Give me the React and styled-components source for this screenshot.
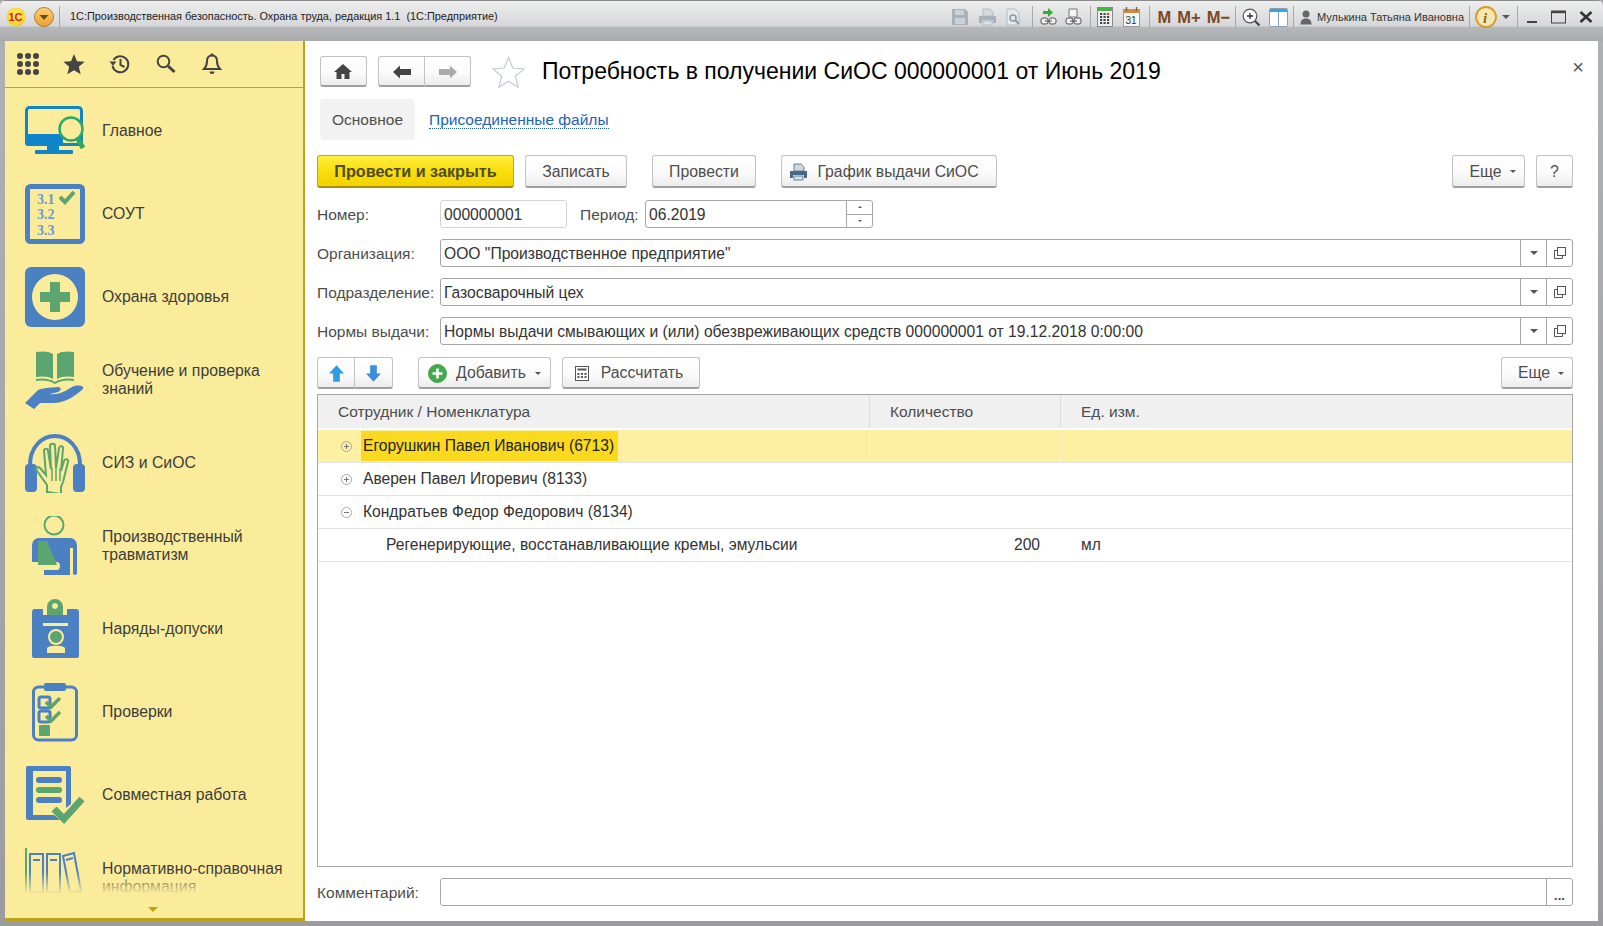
import React from 'react';
import styled, { createGlobalStyle } from 'styled-components';

const GlobalStyle = createGlobalStyle`
    html, body { margin: 0; padding: 0; height: 100%; overflow: hidden; }
    body { font-family: "Liberation Sans", Arial, sans-serif; background: #a9a9ab; }
    * { box-sizing: border-box; }
`;

const Window = styled.div`
    width: 1603px;
    height: 926px;
    display: flex;
    flex-direction: column;
    background: linear-gradient(#b0b1b3, #9c9c9e);
    border-radius: 6px 6px 0 0;
    overflow: hidden;
`;

const TitleBar = styled.div`
    height: 41px;
    flex: none;
    display: flex;
    align-items: flex-start;
    padding: 5px 10px 0 6px;
    border-top: 1px solid #8b8b8b;
    background: linear-gradient(#eeeeee 0, #d6d7d9 62%, #b6b7b9 66%, #a9aaac 100%);
`;

const TitleGroup = styled.div`
    display: flex;
    align-items: center;
    height: 22px;
    gap: ${(p) => p.$gap || 0}px;
    margin-left: ${(p) => p.$left || 0}px;
`;

const TitleSep = styled.div`
    width: 1px;
    height: 22px;
    background: #a9a9a9;
    margin-left: ${(p) => p.$left || 0}px;
`;

const AppTitle = styled.div`
    margin-left: 10px;
    font-size: 10.9px;
    line-height: 21px;
    color: #222;
    white-space: nowrap;
    flex: 1;
`;

const MemoText = styled.span`
    font-weight: 700;
    font-size: 16.5px;
    color: #7c4a21;
`;

const UserName = styled.span`
    font-size: 11px;
    color: #333;
    white-space: nowrap;
`;

const Body = styled.div`
    flex: 1;
    min-height: 0;
    display: flex;
    margin: 0 5px 5px 5px;
`;

const Sidebar = styled.aside`
    position: relative;
    width: 300px;
    flex: none;
    overflow: hidden;
    background: #fbec9b;
    border-right: 2px solid #bca318;
    border-bottom: 3px solid #bca318;
    display: flex;
    flex-direction: column;
`;

const SideTop = styled.div`
    height: 47px;
    flex: none;
    border-bottom: 1px solid #bca318;
    display: flex;
    align-items: center;
    gap: 24px;
    padding: 0 0 0 12px;
`;

const SideList = styled.div`
    padding-top: 1px;
`;

const SideItem = styled.div`
    height: 83px;
    display: flex;
    align-items: center;
    padding-left: 20px;
`;

const SideIcon = styled.svg`
    width: 60px;
    height: 60px;
    flex: none;
`;

const SideLabel = styled.div`
    margin-left: 17px;
    width: 190px;
    font-size: 15.8px;
    line-height: 18px;
    color: #3d3d3d;
`;

const SideFade = styled.div`
    position: absolute;
    left: 0;
    right: 0;
    bottom: 0;
    height: 46px;
    background: linear-gradient(rgba(251, 236, 155, 0), #fbec9b 48%);
`;

const SideArrow = styled.div`
    position: absolute;
    left: 143px;
    bottom: 6px;
    width: 0;
    height: 0;
    border-left: 5px solid transparent;
    border-right: 5px solid transparent;
    border-top: 5px solid #bca318;
`;

const Main = styled.main`
    flex: 1;
    min-width: 0;
    background: #fff;
    padding: 15px 25px 0 12px;
    display: flex;
    flex-direction: column;
    color: #4d4d4d;
    font-size: 15.5px;
`;

const HeaderRow = styled.div`
    height: 31px;
    display: flex;
    align-items: center;
    padding-left: 3px;
`;

const Title = styled.h1`
    margin: -1px 0 0 17px;
    font-weight: 400;
    font-size: 23px;
    color: #000;
    white-space: nowrap;
    flex: 1;
`;

const CloseMark = styled.div`
    margin: -10px -11px 0 0;
    font-size: 20px;
    line-height: 20px;
    color: #555;
`;

const BtnGroup = styled.div`
    display: flex;
    margin-left: ${(p) => p.$left || 0}px;
    height: ${(p) => p.$h || 32}px;
`;

const Btn = styled.button`
    font-family: inherit;
    font-size: 15.8px;
    color: #4d4d4d;
    height: ${(p) => p.$h || 33}px;
    width: ${(p) => p.$w}px;
    margin-left: ${(p) => p.$left || 0}px;
    padding: 1px ${(p) => p.$pr || 0}px 0 ${(p) => p.$pl || 0}px;
    display: flex;
    align-items: center;
    justify-content: center;
    gap: ${(p) => p.$gap || 0}px;
    flex: none;
    border: 1px solid #c2c2c2;
    border-bottom: 2px solid #9f9f9f;
    border-radius: 3px;
    background: linear-gradient(#ffffff 0, #fbfbfb 55%, #ececec 100%);
`;

const PrimaryBtn = styled(Btn)`
    color: #4d4d22;
    font-weight: 700;
    font-size: 16.2px;
    border-color: #c8ab00;
    border-bottom-color: #a98f00;
    background: linear-gradient(#ffef3f 0, #fbdf10 45%, #f2d200 100%);
`;

const SegBtn = styled(Btn)`
    border-radius: ${(p) => (p.$last ? '0 3px 3px 0' : '3px 0 0 3px')};
    border-left-width: ${(p) => (p.$last ? 0 : 1)}px;
`;

const TabsRow = styled.div`
    margin-top: 12px;
    height: 41px;
    display: flex;
    align-items: center;
    padding-left: 3px;
`;

const ActiveTab = styled.div`
    width: 95px;
    height: 41px;
    border-radius: 4px;
    background: #f2f2f2;
    display: flex;
    align-items: center;
    justify-content: center;
`;

const TabLink = styled.span`
    margin-left: 14px;
    color: #1c63b8;
    border-bottom: 1px dotted #1c63b8;
    line-height: 17px;
`;

const ActionRow = styled.div`
    margin-top: 15px;
    display: flex;
`;

const Spacer = styled.div`
    flex: 1;
`;

const FieldRow = styled.div`
    margin-top: ${(p) => p.$top || 11}px;
    height: 28px;
    display: flex;
    align-items: center;
`;

const Label = styled.span`
    width: ${(p) => p.$w || 123}px;
    margin-left: ${(p) => p.$left || 0}px;
    padding-top: 1px;
    flex: none;
    white-space: nowrap;
`;

const Input = styled.div`
    width: ${(p) => (p.$w ? `${p.$w}px` : 'auto')};
    flex: ${(p) => (p.$w ? 'none' : 1)};
    height: 28px;
    display: flex;
    align-items: center;
    border: 1px solid ${(p) => (p.$light ? '#d4d4d4' : '#a6a6a6')};
    border-radius: 3px;
    color: #333;
    font-size: 15.65px;
    overflow: hidden;
`;

const InputText = styled.span`
    flex: 1;
    padding: 1px 0 0 3px;
    white-space: nowrap;
`;

const InputBtn = styled.div`
    width: 26px;
    height: 100%;
    border-left: 1px solid #a6a6a6;
    display: flex;
    align-items: center;
    justify-content: center;
    flex: none;
`;

const Spinner = styled.div`
    width: 26px;
    height: 100%;
    border-left: 1px solid #a6a6a6;
    display: flex;
    flex-direction: column;
    flex: none;
`;

const SpinPart = styled.div`
    flex: 1;
    display: flex;
    align-items: center;
    justify-content: center;
    & + & {
        border-top: 1px solid #a6a6a6;
    }
`;

const Caret = styled.span`
    width: 0;
    height: 0;
    border-left: ${(p) => p.$s || 4}px solid transparent;
    border-right: ${(p) => p.$s || 4}px solid transparent;
    border-top: ${(p) => p.$s || 4}px solid #555;
`;

const CaretUp = styled(Caret)`
    border-top: 0;
    border-bottom: ${(p) => p.$s || 4}px solid #555;
`;

const Toolbar = styled.div`
    margin-top: 12px;
    height: 32px;
    display: flex;
`;

const Table = styled.div`
    margin-top: 5px;
    height: 473px;
    border: 1px solid #a6a6a6;
    flex: none;
`;

const TableRow = styled.div`
    display: grid;
    grid-template-columns: 552px 191px 1fr;
    height: ${(p) => p.$h || 33}px;
    border-bottom: 1px solid #e2e2e2;
    background: ${(p) => (p.$selected ? '#fdf0a3' : 'transparent')};
`;

const HeadRow = styled(TableRow)`
    height: 33px;
    background: #f0f0f0;
    border-bottom: 0;
    margin-bottom: 2px;
`;

const HeadCell = styled.div`
    display: flex;
    align-items: center;
    padding-left: ${(p) => p.$pad || 20}px;
    border-right: 1px solid ${(p) => (p.$last ? 'transparent' : '#dcdcdc')};
`;

const Cell = styled.div`
    display: flex;
    align-items: center;
    height: 100%;
    min-width: 0;
    color: #333;
    font-size: 15.6px;
    white-space: nowrap;
    padding-left: ${(p) => p.$pad || 0}px;
    justify-content: ${(p) => (p.$right ? 'flex-end' : 'flex-start')};
    padding-right: ${(p) => (p.$right ? 20 : 0)}px;
    border-right: 1px solid ${(p) => (p.$divided ? '#fff6c4' : 'transparent')};
`;

const TreeMark = styled.span`
    width: 11px;
    height: 11px;
    border: 1px solid #a8a8a8;
    border-radius: 50%;
    position: relative;
    flex: none;
    margin-right: 11px;
    &::before {
        content: '';
        position: absolute;
        left: 2px;
        right: 2px;
        top: 4px;
        height: 1px;
        background: #777;
    }
    &::after {
        content: '';
        display: ${(p) => (p.$open ? 'none' : 'block')};
        position: absolute;
        top: 2px;
        bottom: 2px;
        left: 4px;
        width: 1px;
        background: #777;
    }
`;

const Highlight = styled.span`
    height: 30px;
    margin-left: -2px;
    padding: 0 4px 0 2px;
    display: flex;
    align-items: center;
    background: ${(p) => (p.$on ? '#fbd91f' : 'transparent')};
    color: ${(p) => (p.$on ? '#222' : '#333')};
`;

const Dots = styled.span`
    font-weight: 700;
    font-size: 13px;
    color: #444;
    margin-top: 6px;
`;

const StarGap = styled.span`
    width: 21px;
    flex: none;
`;

// --- small icon set, all hand drawn to follow the picture ---

const Glyph = ({ w = 18, h = 18, vb, children }) => (
    <svg width={w} height={h} viewBox={vb || `0 0 ${w} ${h}`} style={{ flex: 'none' }}>
        {children}
    </svg>
);

const LogoMark = () => (
    <Glyph w={20} h={20}>
        <defs>
            <radialGradient id="logoBg" cx="50%" cy="40%" r="60%">
                <stop offset="0%" stopColor="#ffef6a" />
                <stop offset="100%" stopColor="#f8cf1c" />
            </radialGradient>
        </defs>
        <circle cx="10" cy="10" r="9.5" fill="url(#logoBg)" />
        <text x="2.5" y="14" fontSize="11" fontWeight="700" fill="#d62020" fontFamily="Liberation Sans">1С</text>
    </Glyph>
);

const MenuCircle = () => (
    <Glyph w={20} h={20}>
        <defs>
            <linearGradient id="menuBg" x1="0" y1="0" x2="0" y2="1">
                <stop offset="0%" stopColor="#fbd27a" />
                <stop offset="100%" stopColor="#ec9f2d" />
            </linearGradient>
        </defs>
        <circle cx="10" cy="10" r="9.5" fill="url(#menuBg)" stroke="#a8803c" strokeWidth="1" />
        <path d="M5.5 8h9L10 13z" fill="#6b4a1c" />
    </Glyph>
);

const SaveIcon = () => (
    <Glyph>
        <path d="M1 1h13l3 3v13H1z" fill="#a9b2bb" />
        <rect x="4" y="2" width="9" height="5" fill="#cdd2d7" />
        <rect x="4" y="10" width="10" height="6" fill="#cdd2d7" />
    </Glyph>
);

const PrintIcon = ({ color = '#a9b2bb', w = 19 }) => (
    <Glyph w={w} h={18} vb="0 0 19 18">
        <path d="M5 1h7l3 3v4H5z" fill="#d5d8db" stroke={color} strokeWidth="0.8" />
        <path d="M1 8h17v7h-3v-3H4v3H1z" fill={color} />
        <rect x="5" y="13" width="9" height="4" fill="#dfe2e5" stroke={color} strokeWidth="0.8" />
    </Glyph>
);

const PreviewIcon = () => (
    <Glyph w={14} h={18}>
        <path d="M1 1h8l4 4v12H1z" fill="#e6e8ea" stroke="#b7bdc2" />
        <circle cx="7" cy="10" r="3" fill="none" stroke="#8d99a3" strokeWidth="1.5" />
        <path d="M9 12l4 4" stroke="#8d99a3" strokeWidth="2" />
    </Glyph>
);

const LinkDocIcon = ({ green }) => (
    <Glyph w={17} h={18}>
        {green ? (
            <path d="M3 3h5V0l5 4.500L8 9V6H3z" fill="#3aa83a" />
        ) : (
            <path d="M4 1h8v8H4z" fill="#f4f4f4" stroke="#777" />
        )}
        <rect x="1" y="10" width="7" height="6" rx="2" fill="#eee" stroke="#555" />
        <rect x="9" y="10" width="7" height="6" rx="2" fill="#eee" stroke="#555" />
        <path d="M5 13h7" stroke="#555" />
    </Glyph>
);

const CalcIcon = () => (
    <Glyph w={16} h={20}>
        <rect x="0.5" y="0.5" width="15" height="19" fill="#f0f0f0" stroke="#888" />
        <rect x="1" y="1" width="14" height="3" fill="#4db04a" />
        {[6, 9, 12, 15].map((y) =>
            [3, 6.5, 10].map((x) => <rect key={`${x}-${y}`} x={x} y={y} width="2.2" height="2" fill={y === 6 && x === 10 ? '#e03030' : '#444'} />)
        )}
    </Glyph>
);

const CalendarIcon = () => (
    <Glyph w={17} h={20}>
        <rect x="0.5" y="2.5" width="16" height="17" fill="#f7f7f7" stroke="#999" />
        <rect x="1" y="3" width="15" height="3" fill="#d08a48" />
        <path d="M3.5 0v4M13.5 0v4" stroke="#8a5a2c" strokeWidth="1.4" />
        <text x="2.5" y="16.5" fontSize="10" fill="#333" fontFamily="Liberation Sans">31</text>
    </Glyph>
);

const ZoomPlusIcon = () => (
    <Glyph w={18} h={19}>
        <circle cx="8" cy="8" r="6.8" fill="#f7f7f7" stroke="#555" strokeWidth="1.2" />
        <path d="M5 8h6M8 5v6" stroke="#333" strokeWidth="1.3" />
        <path d="M13 13l4.5 4.5" stroke="#444" strokeWidth="2.2" />
    </Glyph>
);

const PanelIcon = () => (
    <Glyph w={19} h={19}>
        <rect x="0.5" y="0.5" width="18" height="18" rx="1" fill="#fdfdfd" stroke="#8aa0b5" />
        <rect x="1" y="1" width="17" height="3" fill="#3fa0e6" />
        <path d="M9.5 4v14" stroke="#8aa0b5" />
    </Glyph>
);

const UserIcon = () => (
    <Glyph w={12} h={15}>
        <circle cx="6" cy="4" r="3.5" fill="#666" />
        <path d="M0.5 14.5c0-4 2-6 5.5-6s5.5 2 5.5 6z" fill="#666" />
    </Glyph>
);

const InfoIcon = () => (
    <Glyph w={22} h={22}>
        <circle cx="11" cy="11" r="10" fill="#f6e7b0" stroke="#d79a2c" strokeWidth="1.8" />
        <text x="8" y="17" fontSize="15" fontStyle="italic" fontWeight="700" fill="#8a6a20" fontFamily="Liberation Serif">i</text>
    </Glyph>
);

const WinMin = () => (
    <Glyph w={11} h={14}>
        <rect y="11" width="10" height="2" fill="#444" />
    </Glyph>
);

const WinMax = () => (
    <Glyph w={15} h={14}>
        <rect x="0.5" y="1" width="14" height="12" fill="none" stroke="#444" />
        <rect x="0.5" y="1" width="14" height="2.2" fill="#444" />
    </Glyph>
);

const WinClose = () => (
    <Glyph w={14} h={14}>
        <path d="M1.5 2l11 10M12.5 2l-11 10" stroke="#333" strokeWidth="2.6" />
    </Glyph>
);

const AppsIcon = () => (
    <Glyph w={22} h={22}>
        {[3, 11, 19].map((y) =>
            [3, 11, 19].map((x) => <circle key={`${x}-${y}`} cx={x} cy={y} r="3" fill="#444" />)
        )}
    </Glyph>
);

const StarIcon = () => (
    <Glyph w={22} h={22}>
        <path d="M11 1l3 7.2 7.7.6-5.9 5 1.9 7.5L11 17.3l-6.7 4 1.9-7.5-5.9-5 7.7-.6z" fill="#444" />
    </Glyph>
);

const HistoryIcon = () => (
    <Glyph w={22} h={22}>
        <path d="M4.5 7a8 8 0 1 1-1 6" fill="none" stroke="#444" strokeWidth="2" />
        <path d="M0.5 7.5h7L4 12z" fill="#444" transform="translate(0 1)" />
        <path d="M11.5 6v6l4 2" fill="none" stroke="#444" strokeWidth="2" />
    </Glyph>
);

const SearchIcon = () => (
    <Glyph w={22} h={22} vb="-1 -1 22 22">
        <circle cx="7.5" cy="7.5" r="5.8" fill="none" stroke="#444" strokeWidth="2" />
        <path d="M12 12l6.5 6" stroke="#444" strokeWidth="3" />
    </Glyph>
);

const BellIcon = () => (
    <Glyph w={22} h={22} vb="-1 0 22 22">
        <path d="M10 2.500c-3.600 0-5 2.600-5 5.500 0 4-1 6-3 8h16c-2-2-3-4-3-8 0-2.900-1.400-5.500-5-5.500z" fill="none" stroke="#444" strokeWidth="2" />
        <path d="M7.500 18.500a2.500 2.500 0 0 0 5 0z" fill="#444" />
        <circle cx="10" cy="1.800" r="1.500" fill="#444" />
    </Glyph>
);

const HomeIcon = () => (
    <Glyph w={18} h={15}>
        <path d="M9 0L0 8h2.500v7h5v-5h3v5h5V8H18z" fill="#444" />
    </Glyph>
);

const ArrowIcon = ({ dir, color }) => (
    <Glyph w={18} h={14}>
        <path
            d={dir === 'left' ? 'M0 7l7-6.500V4h11v6H7v3.500z' : 'M18 7l-7-6.500V4H0v6h11v3.500z'}
            fill={color}
        />
    </Glyph>
);

const OutlineStar = () => (
    <Glyph w={33} h={32}>
        <path d="M16.500 1.500l4.300 10.500 11.200.9-8.600 7.300 2.700 11-9.600-5.900-9.600 5.900 2.700-11L1 12.900 12.200 12z" fill="#fff" stroke="#c4cad0" strokeWidth="1.200" />
    </Glyph>
);

const VertArrow = ({ up }) => (
    <Glyph w={15} h={17} vb="0 0 18 20">
        <path
            d={up ? 'M9 0l9 10h-5v10H5V10H0z' : 'M9 20l9-10h-5V0H5v10H0z'}
            fill={up ? '#2f9be4' : '#3d8fdc'}
        />
    </Glyph>
);

const PlusCircle = () => (
    <Glyph w={19} h={19}>
        <circle cx="9.500" cy="9.500" r="9" fill="#3fae49" stroke="#2f8f38" strokeWidth="0.8" />
        <path d="M4.500 9.500h10M9.500 4.500v10" stroke="#fff" strokeWidth="2.600" />
    </Glyph>
);

const SmallCalc = () => (
    <Glyph w={14} h={15}>
        <rect x="0.500" y="0.500" width="13" height="14" fill="#fff" stroke="#555" />
        <rect x="2.500" y="2.500" width="9" height="2" fill="#555" />
        {[7, 10].map((y) =>
            [2.5, 6, 9.500].map((x) => <rect key={`${x}-${y}`} x={x} y={y} width="2" height="2" fill="#555" />)
        )}
    </Glyph>
);

const OpenIcon = () => (
    <Glyph w={12} h={12}>
        <rect x="3.500" y="0.500" width="8" height="8" fill="#fff" stroke="#555" />
        <path d="M3.500 3.500H.5v8h8v-3" fill="none" stroke="#555" />
    </Glyph>
);

// --- section icons of the left panel ---

const BLUE = '#4b80c2';
const GREEN = '#5ba570';
const PANEL = '#fbec9b';
const NUM = '#6b9bd2';

const icons = {
    main: (
        <>
            <rect x="1.500" y="6.500" width="55" height="37" rx="3" fill="none" stroke="#0e86c9" strokeWidth="3" />
            <path d="M0 33h38v12H3a3 3 0 0 1-3-3z" fill="#0e86c9" />
            <rect x="22" y="45" width="12" height="5" fill="#0e86c9" />
            <rect x="10" y="49" width="38" height="4" rx="1" fill="#0e86c9" />
            <circle cx="46" cy="28" r="11.500" fill={PANEL} stroke="#2da865" strokeWidth="2.500" />
            <path d="M53 38l5 9" stroke="#2da865" strokeWidth="5" />
        </>
    ),
    sout: (
        <>
            <rect x="2.500" y="2.500" width="55" height="55" rx="3" fill={PANEL} stroke={BLUE} strokeWidth="5" />
            <text x="12" y="20" fontSize="14" fontWeight="700" fill={NUM} fontFamily="Liberation Serif">3.1</text>
            <text x="12" y="35" fontSize="14" fontWeight="700" fill={NUM} fontFamily="Liberation Serif">3.2</text>
            <text x="12" y="51" fontSize="14" fontWeight="700" fill={NUM} fontFamily="Liberation Serif">3.3</text>
            <path d="M35 13l5 5 9-10" fill="none" stroke={GREEN} strokeWidth="4" />
        </>
    ),
    health: (
        <>
            <rect width="60" height="60" rx="6" fill={BLUE} />
            <circle cx="30" cy="30" r="23" fill={PANEL} />
            <path d="M25 15h10v10h10v10H35v10H25V35H15V25h10z" fill={GREEN} />
        </>
    ),
    edu: (
        <>
            <path d="M11 2c6-1 13-1 17 2v25c-4-3-11-3-17-2zM49 2c-6-1-13-1-17 2v25c4-3 11-3 17-2z" fill={GREEN} />
            <path d="M11 30c7-1 14 0 19 3 5-3 12-4 19-3" fill="none" stroke={GREEN} strokeWidth="2" />
            <path d="M0 53l13-13c8-3 14-2 20-3 4 0 3 4 0 5l-8 2c8 1 14-2 22-7 6-3 13-1 11 2-8 7-18 15-33 14H15l-6 6z" fill={BLUE} />
        </>
    ),
    siz: (
        <>
            <path d="M5 32C5 14 17 3 30 3s25 11 25 29" fill="none" stroke={BLUE} strokeWidth="4" />
            <rect x="0" y="31" width="12" height="28" rx="4" fill={BLUE} />
            <rect x="48" y="31" width="12" height="28" rx="4" fill={BLUE} />
            <path d="M22 59v-7L12 38c-2-3 1-5 3-3l6 7-2-24c0-3 4-3 4 0l3 18-1-23c0-3 5-3 5 0l1 22 3-20c1-3 5-2 4 1l-2 22 3-10c1-3 5-2 4 1l-5 20-2 5v7z" fill="none" stroke={GREEN} strokeWidth="2" />
            <path d="M27 35v13M31 35v13M35 35v13" stroke={GREEN} strokeWidth="1.500" />
        </>
    ),
    injury: (
        <>
            <circle cx="29" cy="9" r="9.500" fill="none" stroke={GREEN} strokeWidth="2" />
            <path d="M14 22h31a7 7 0 0 1 7 7v28a2 2 0 0 1-4 0V32h-3v27H19v-5h13c4 0 4-8 0-8H7V29a7 7 0 0 1 7-7z" fill={BLUE} />
            <path d="M13 25h9l10 24H13z" fill={GREEN} />
        </>
    ),
    permit: (
        <>
            <path d="M9 10h9v6h24v-6h9a3 3 0 0 1 3 3v44a2 2 0 0 1-2 2H9a2 2 0 0 1-2-2V13a3 3 0 0 1 2-3z" fill={BLUE} />
            <path fillRule="evenodd" d="M22 16V8a8 8 0 0 1 16 0v8zM30 4a3 3 0 1 0 .01 0z" fill={GREEN} />
            <rect x="18" y="24" width="25" height="3" fill={PANEL} />
            <circle cx="31" cy="38" r="7" fill={GREEN} stroke={PANEL} strokeWidth="2" />
            <path d="M22 54v-5c2-3 16-3 18 0v5z" fill={PANEL} />
        </>
    ),
    check: (
        <>
            <rect x="8.500" y="5" width="43" height="53" rx="5" fill={PANEL} stroke={BLUE} strokeWidth="3" />
            <rect x="19" y="1" width="22" height="8" rx="2" fill={BLUE} />
            <rect x="14" y="15" width="11" height="11" rx="2" fill="none" stroke={BLUE} strokeWidth="3" />
            <rect x="14" y="29" width="11" height="11" rx="2" fill="none" stroke={BLUE} strokeWidth="3" />
            <rect x="14" y="43" width="11" height="11" rx="1" fill={GREEN} />
            <path d="M21 20l5 5 9-9M21 34l5 5 9-9" fill="none" stroke={GREEN} strokeWidth="3.500" />
        </>
    ),
    work: (
        <>
            <path d="M2 1h42a2 2 0 0 1 2 2v36l-5 4V6H8v44h21l6 5H3a2 2 0 0 1-2-2V3a2 2 0 0 1 1-2z" fill={BLUE} />
            <rect x="11" y="12" width="26" height="6" rx="3" fill={BLUE} />
            <rect x="11" y="22" width="26" height="6" rx="3" fill={GREEN} />
            <rect x="11" y="32" width="26" height="6" rx="3" fill={BLUE} />
            <path d="M29 44l10 10 18-20" fill="none" stroke={GREEN} strokeWidth="7" />
        </>
    ),
    refs: (
        <>
            <rect x="0" y="0" width="2" height="44" fill={GREEN} />
            <rect x="5" y="6" width="13" height="38" fill="none" stroke={BLUE} strokeWidth="2" />
            <rect x="22" y="6" width="13" height="38" fill="none" stroke={BLUE} strokeWidth="2" />
            <path d="M38 8l11-3 7 38-11 2z" fill="none" stroke={BLUE} strokeWidth="2" />
            <path d="M8 12h7M25 12h7M41 12l7-2" stroke={BLUE} strokeWidth="2" />
        </>
    ),
};

const sections = [
    { id: 'main', label: 'Главное' },
    { id: 'sout', label: 'СОУТ' },
    { id: 'health', label: 'Охрана здоровья' },
    { id: 'edu', label: 'Обучение и проверка знаний' },
    { id: 'siz', label: 'СИЗ и СиОС' },
    { id: 'injury', label: 'Производственный травматизм' },
    { id: 'permit', label: 'Наряды-допуски' },
    { id: 'check', label: 'Проверки' },
    { id: 'work', label: 'Совместная работа' },
    { id: 'refs', label: 'Нормативно-справочная информация' },
];

function TitleBarRow() {
    return (
        <TitleBar>
            <TitleGroup $gap={8}>
                <LogoMark />
                <MenuCircle />
            </TitleGroup>
            <TitleSep $left={5} />
            <AppTitle>1С:Производственная безопасность. Охрана труда, редакция 1.1 &nbsp;(1С:Предприятие)</AppTitle>
            <TitleGroup $gap={9}>
                <SaveIcon />
                <PrintIcon />
                <PreviewIcon />
            </TitleGroup>
            <TitleSep $left={12} />
            <TitleGroup $gap={8} $left={7}>
                <LinkDocIcon green />
                <LinkDocIcon />
            </TitleGroup>
            <TitleSep $left={8} />
            <TitleGroup $gap={10} $left={6}>
                <CalcIcon />
                <CalendarIcon />
            </TitleGroup>
            <TitleSep $left={9} />
            <TitleGroup $gap={6} $left={8}>
                <MemoText>M</MemoText>
                <MemoText>M+</MemoText>
                <MemoText>M−</MemoText>
            </TitleGroup>
            <TitleSep $left={5} />
            <TitleGroup $gap={9} $left={6}>
                <ZoomPlusIcon />
                <PanelIcon />
            </TitleGroup>
            <TitleSep $left={5} />
            <TitleGroup $gap={5} $left={6}>
                <UserIcon />
                <UserName>Мулькина Татьяна Ивановна</UserName>
            </TitleGroup>
            <TitleSep $left={5} />
            <TitleGroup $gap={5} $left={5}>
                <InfoIcon />
                <Caret $s={4} />
            </TitleGroup>
            <TitleSep $left={7} />
            <TitleGroup $gap={13} $left={9}>
                <WinMin />
                <WinMax />
                <WinClose />
            </TitleGroup>
        </TitleBar>
    );
}

function SidePanel() {
    return (
        <Sidebar>
            <SideTop>
                <AppsIcon />
                <StarIcon />
                <HistoryIcon />
                <SearchIcon />
                <BellIcon />
            </SideTop>
            <SideList>
                {sections.map((s) => (
                    <SideItem key={s.id}>
                        <SideIcon viewBox="0 0 60 60">{icons[s.id]}</SideIcon>
                        <SideLabel>{s.label}</SideLabel>
                    </SideItem>
                ))}
            </SideList>
            <SideFade />
            <SideArrow />
        </Sidebar>
    );
}

function RefField({ label, value }) {
    return (
        <FieldRow>
            <Label>{label}</Label>
            <Input>
                <InputText>{value}</InputText>
                <InputBtn>
                    <Caret />
                </InputBtn>
                <InputBtn>
                    <OpenIcon />
                </InputBtn>
            </Input>
        </FieldRow>
    );
}

function Employee({ name, open, selected }) {
    return (
        <TableRow $selected={selected}>
            <Cell $pad={23} $divided={selected}>
                <TreeMark $open={open} />
                <Highlight $on={selected}>{name}</Highlight>
            </Cell>
            <Cell $divided={selected} />
            <Cell />
        </TableRow>
    );
}

export default function App() {
    return (
        <>
            <GlobalStyle />
            <Window>
                <TitleBarRow />
                <Body>
                    <SidePanel />
                    <Main>
                        <HeaderRow>
                            <Btn $w={47} $h={31} $pr={2}>
                                <HomeIcon />
                            </Btn>
                            <BtnGroup $left={11} $h={31}>
                                <SegBtn $w={47} $h={31}>
                                    <ArrowIcon dir="left" color="#444" />
                                </SegBtn>
                                <SegBtn $w={46} $h={31} $last>
                                    <ArrowIcon dir="right" color="#aaa" />
                                </SegBtn>
                            </BtnGroup>
                            <StarGap />
                            <OutlineStar />
                            <Title>Потребность в получении СиОС 000000001 от Июнь 2019</Title>
                            <CloseMark>×</CloseMark>
                        </HeaderRow>
                        <TabsRow>
                            <ActiveTab>Основное</ActiveTab>
                            <TabLink>Присоединенные файлы</TabLink>
                        </TabsRow>
                        <ActionRow>
                            <PrimaryBtn $w={197}>Провести и закрыть</PrimaryBtn>
                            <Btn $w={102} $left={11}>Записать</Btn>
                            <Btn $w={104} $left={25}>Провести</Btn>
                            <Btn $w={216} $left={25} $gap={9} $pr={10}>
                                <PrintIcon color="#46698c" />
                                График выдачи СиОС
                            </Btn>
                            <Spacer />
                            <Btn $w={73} $gap={8} $pl={8}>Еще <Caret $s={3} /></Btn>
                            <Btn $w={37} $left={11}>?</Btn>
                        </ActionRow>
                        <FieldRow $top={12}>
                            <Label>Номер:</Label>
                            <Input $w={127} $light>
                                <InputText>000000001</InputText>
                            </Input>
                            <Label $w={65} $left={13}>Период:</Label>
                            <Input $w={228}>
                                <InputText>06.2019</InputText>
                                <Spinner>
                                    <SpinPart><CaretUp $s={2} /></SpinPart>
                                    <SpinPart><Caret $s={2} /></SpinPart>
                                </Spinner>
                            </Input>
                        </FieldRow>
                        <RefField label="Организация:" value={'ООО "Производственное предприятие"'} />
                        <RefField label="Подразделение:" value="Газосварочный цех" />
                        <RefField label="Нормы выдачи:" value="Нормы выдачи смывающих и (или) обезвреживающих средств 000000001 от 19.12.2018 0:00:00" />
                        <Toolbar>
                            <BtnGroup>
                                <SegBtn $w={38} $h={32}><VertArrow up /></SegBtn>
                                <SegBtn $w={38} $h={32} $last><VertArrow /></SegBtn>
                            </BtnGroup>
                            <Btn $w={133} $h={32} $left={25} $gap={9}>
                                <PlusCircle />
                                Добавить
                                <Caret $s={3} />
                            </Btn>
                            <Btn $w={138} $h={32} $left={11} $gap={12} $pr={4}>
                                <SmallCalc />
                                Рассчитать
                            </Btn>
                            <Spacer />
                            <Btn $w={72} $h={32} $gap={8} $pl={8}>Еще <Caret $s={3} /></Btn>
                        </Toolbar>
                        <Table>
                            <HeadRow>
                                <HeadCell>Сотрудник / Номенклатура</HeadCell>
                                <HeadCell>Количество</HeadCell>
                                <HeadCell $last>Ед. изм.</HeadCell>
                            </HeadRow>
                            <Employee name="Егорушкин Павел Иванович (6713)" selected />
                            <Employee name="Аверен Павел Игоревич (8133)" />
                            <Employee name="Кондратьев Федор Федорович (8134)" open />
                            <TableRow>
                                <Cell $pad={68}>Регенерирующие, восстанавливающие кремы, эмульсии</Cell>
                                <Cell $right>200</Cell>
                                <Cell $pad={20}>мл</Cell>
                            </TableRow>
                        </Table>
                        <FieldRow $top={11}>
                            <Label>Комментарий:</Label>
                            <Input>
                                <InputText />
                                <InputBtn><Dots>...</Dots></InputBtn>
                            </Input>
                        </FieldRow>
                    </Main>
                </Body>
            </Window>
        </>
    );
}
